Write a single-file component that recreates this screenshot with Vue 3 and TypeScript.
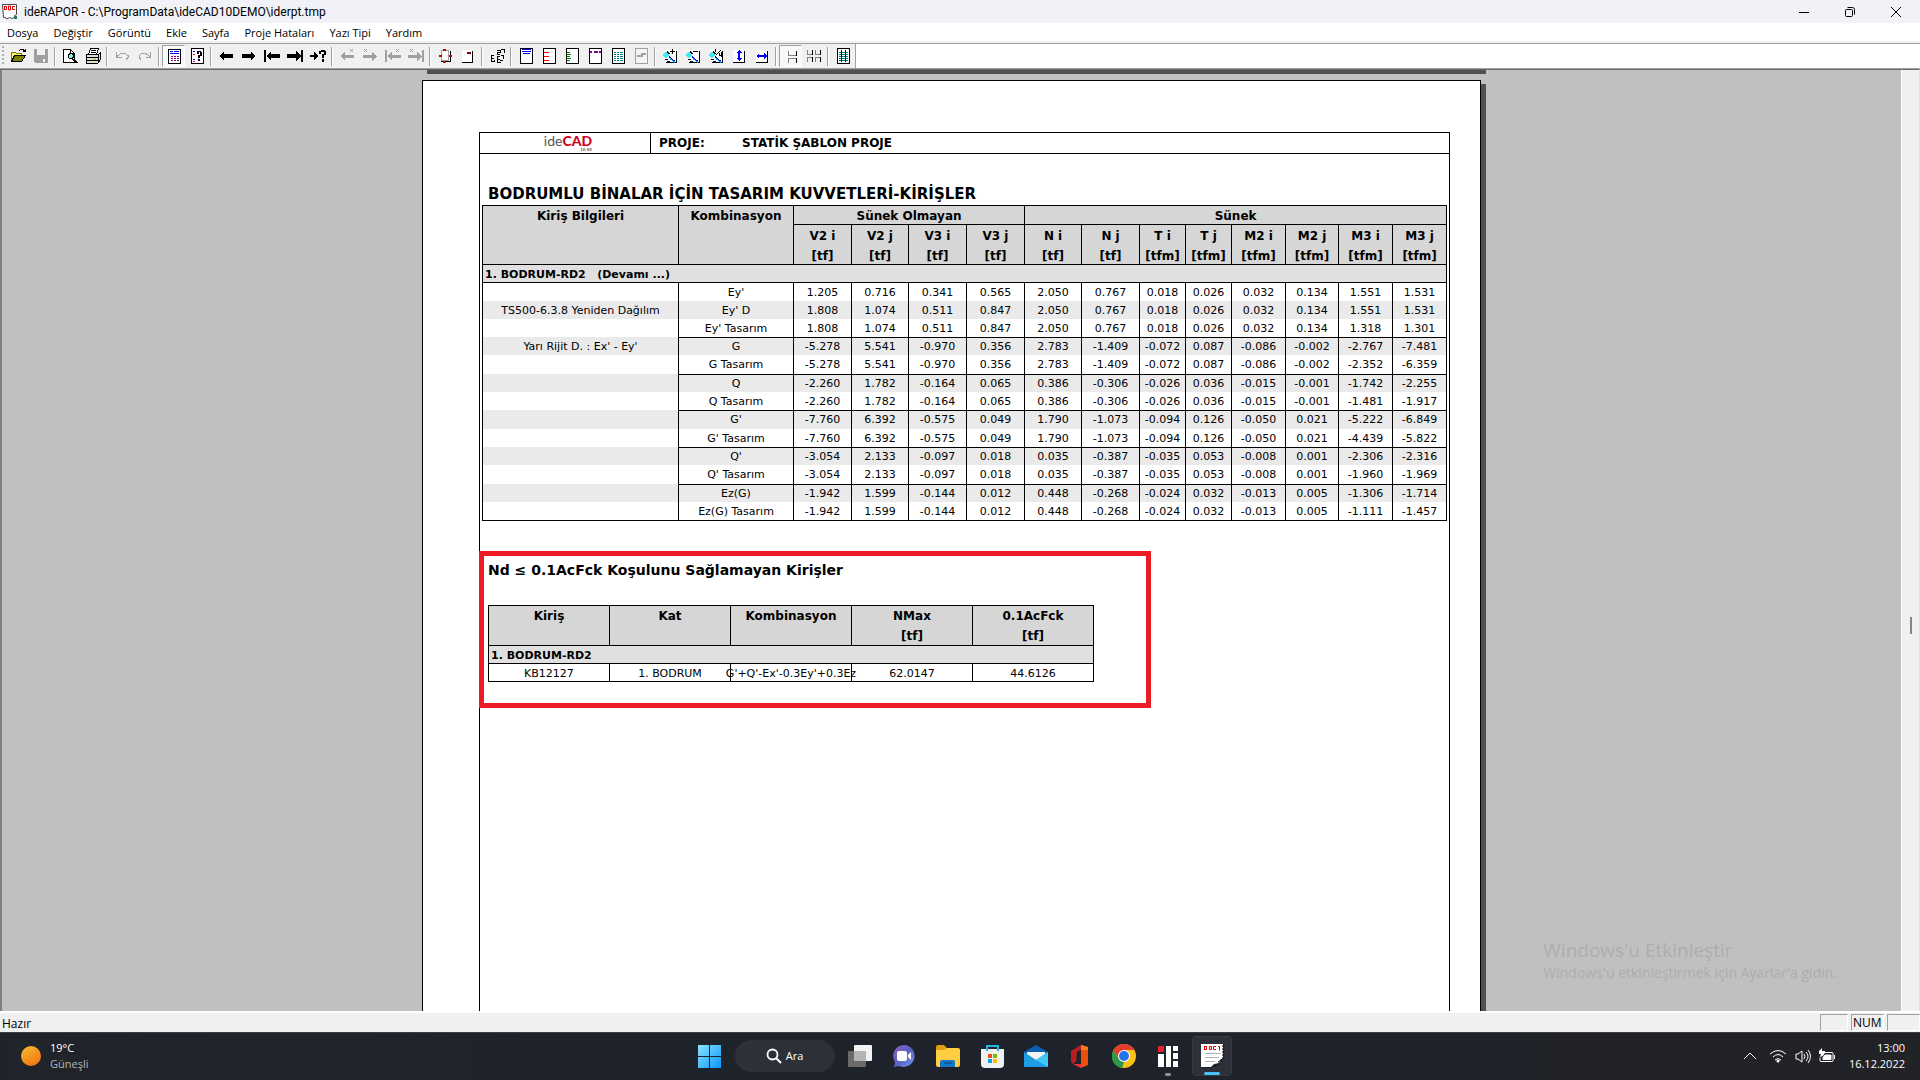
<script setup lang="ts">
type Layer = [d: string, stroke: string, fill?: string]
interface Tool { name: string; art?: Layer[]; pressed?: boolean; sep?: boolean }
interface Row { info: string; combo: string; values: string[]; start?: boolean; tall?: boolean }

const menus = ['Dosya', 'Değiştir', 'Görüntü', 'Ekle', 'Sayfa', 'Proje Hataları', 'Yazı Tipi', 'Yardım']

const K = '#000'
const G = '#a0a0a0'
const B = '#0000ff'
const page: Layer = ['M2.5 .5h12v15h-12z', K, '#fff']
const left = 'M1 8l5-4v2h9v4h-9v2z'
const right = 'M15 8l-5-4v2h-9v4h9v2z'
const sheet: Layer = ['M3 2h11v12h-11z', 'none', '#fff']
const sheetEdge: Layer = ['M4 14.5h10.5v-12', K]
const lens: Layer[] = [
  ['M1 6h1v-1h1v-1h2v1h1v1h1v2h-1v1h-1v1h-2v-1h-1v-1h-1z', 'none', '#40e8f0'],
  ['M4.5 3.5h1v1h1v1h1', K],
  ['M7 8.5l6 5', '#0000c0'],
  ['M8 10.5l5 4', '#00a0ff'],
  ['M3 11.500h3M5 13.500h3', K],
]

const tools: Tool[] = [
  { name: 'Aç', art: [['M1.5 4.5h4l1 1h5v2h-7l-3 5z', '#808000', '#ffff60'], ['M4.5 7.5h11l-4 6h-10z', K, '#808000'], ['M9 2.5l2-1h2l2 2M15.5 .5v3h-3', K]] },
  { name: 'Kaydet', art: [['M1 1h14v14h-13l-1-1z', 'none', G], ['M4 1h8v6h-8zM10 11h2v3h-2z', 'none', '#f0f0f0']] },
  { name: 'sep', sep: true },
  { name: 'Baskı önizleme', art: [['M1.5 1.5h7l4 4v9h-11z', K, '#fff'], ['M8.5 1.5v4h4', K], ['M6 6.500h1l1-1h2l1 1v3l-1 1h-2l-2-1z', K, '#80f0f0'], ['M11.5 11l4 4M10.5 11.5l4 4', K]] },
  { name: 'Yazdır', art: [['M5.5 .5h8l-2 6h-8z', K, '#fff'], ['M6 2.5h5M5.5 4.5h5', K], ['M1.5 6.5h12l2-2v7l-3 4h-11z', K, '#e0e0d0'], ['M1 9.5h12M1 12.5h12M13.5 7v7', K], ['M8 11h3', '#c0c000']] },
  { name: 'sep', sep: true },
  { name: 'Geri al', art: [['M2.5 4v5h5M3 8.5l4-3h4l3 2v2l-2 2', G]] },
  { name: 'Yinele', art: [['M13.5 4v5h-5M13 8.5l-4-3h-4l-3 2v2l2 2', G]] },
  { name: 'sep', sep: true },
  { name: 'Rapor', pressed: true, art: [['M2.5 1.5h12v14h-12z', K, '#fff'], ['M4 3.5h3M8 3.5h5', B], ['M4 5.5h9', B], ['M5 8.5h2M8 8.5h2M11 8.5h2M5 10.5h2M8 10.5h2M11 10.5h2M5 12.5h2M8 12.5h2M11 12.5h2', '#800080']] },
  { name: 'Rapor bilgisi', art: [page, ['M4 3.5h2M4 11.5h2', B], ['M4 6.5h2M4 13.5h2', '#f00'], ['M8 3h4v1h1v4h-2v2h-2v-3h2v-3h-1v2h-2zM9 11h2v2h-2z', 'none', K]] },
  { name: 'sep', sep: true },
  { name: 'Önceki', art: [[left, 'none', K]] },
  { name: 'Sonraki', art: [[right, 'none', K]] },
  { name: 'İlk', art: [['M0 2h2v12h-2zM2 8l5-5v3h9v4h-9v3z', 'none', K]] },
  { name: 'Son', art: [['M14 2h2v12h-2zM14 8l-5-5v3h-9v4h9v3z', 'none', K]] },
  { name: 'Sayfaya git', art: [['M8 8l-4-4v3h-4v2h4v3z', 'none', K], ['M9 3h2v-1h4v1h1v4h-2v3h-2v-4h2v-2h-3v2h-2zM12 11h2v3h-2z', 'none', K]] },
  { name: 'sep', sep: true },
  { name: 'Önceki hata', art: [['M1 8l5-4v3h9v3h-9v3z', 'none', G], ['M11 1l3 3M14 1l-3 3', G]] },
  { name: 'Sonraki hata', art: [['M15 8l-5-4v3h-9v3h9v3z', 'none', G], ['M2 1l3 3M5 1l-3 3', G]] },
  { name: 'İlk hata', art: [['M0 2h2v12h-2zM2 8l5-4v3h9v3h-9v3z', 'none', G], ['M11 1l3 3M14 1l-3 3', G]] },
  { name: 'Son hata', art: [['M14 2h2v12h-2zM14 8l-5-4v3h-9v3h9v3z', 'none', G], ['M2 1l3 3M5 1l-3 3', G]] },
  { name: 'sep', sep: true },
  { name: 'Sayfa boyutu', art: [['M4 3h9v10h-9z', 'none', '#fff'], ['M4.5 2.5h7v10h-7z', G], ['M4 13.500h9.500v-11', K], ['M6 1h3v2h-3zM2 7h3v2h-3zM12 7h3v2h-3zM6 13h3v2h-3z', 'none', '#d00000']] },
  { name: 'Sayfa numarası', art: [['M2 2h11v12h-11z', 'none', '#fff'], ['M2 14.500h10.500v-12', K], ['M7 4h4v2h-4z', 'none', '#800000']] },
  { name: 'sep', sep: true },
  { name: 'Karakterler', art: [['M2.500 8v6M2 10.500h3M2 13.500h4M5.500 12v2M2 7.500h3M8.500 9v5M8 8.500h3M8 11.500h3M8 14.500h4M8 2.500h3v2h-3v2h3M12 1.500h3v3M12 7.500h3M14.500 7v4M11 12.500h3', K]] },
  { name: 'sep', sep: true },
  { name: 'Üst bilgi', art: [page, ['M4 1.500h9M4 3.500h9M5 5.500h7', '#0000ff']] },
  { name: 'Sol kenar', art: [page, ['M3 4.500h5M3 8.500h5M3 12.500h5', '#f00']] },
  { name: 'Cetvel', art: [page, ['M3 4.500h3M3 6.500h4M3 8.500h3M3 10.500h4M3 12.500h3', '#008000']] },
  { name: 'Üst kenar', art: [page, ['M3 4.500h2M7 4.500h4M12 4.500h2M3 3.500h2M7 3.500h4M12 3.500h2', '#800080']] },
  { name: 'Izgara', art: [page, ['M4 4.500h2M7 4.500h2M10 4.500h3M4 6.500h2M7 6.500h2M10 6.500h3M4 8.500h2M7 8.500h2M10 8.500h3M4 10.500h2M7 10.500h2M10 10.500h3M4 12.500h2M7 12.500h2M10 12.500h3', '#008080']] },
  { name: 'Çizgi', art: [['M2.500 .5h12v15h-12z', G, '#f4f4f4'], ['M4 7h4v-2h5v2h-3v2h-6z', 'none', G]] },
  { name: 'sep', sep: true },
  { name: 'Yakınlaş', art: [sheet, sheetEdge, ...lens, ['M8 3.500h5M10.500 1v5', K]] },
  { name: 'Uzaklaş', art: [sheet, sheetEdge, ...lens, ['M8 3.500h5', K]] },
  { name: 'Yüzde', art: [sheet, sheetEdge, ...lens, ['M7.500 1v3M8 7l5-5M11.500 5v2h2M13.500 4v5', K]] },
  { name: 'Sayfa yüksekliği', art: [['M2 2h11v12h-11z', 'none', '#fff'], ['M2 14.500h11.500v-12', K], ['M8 2l3 3h-2v5h2l-3 3l-3-3h2v-5h-2z', 'none', '#0000ff']] },
  { name: 'Sayfa genişliği', art: [['M2 2h11v12h-11z', 'none', '#fff'], ['M2 14.500h11.500v-12', K], ['M2 8l3-3v2h5v-2l3 3l-3 3v-2h-5v2z', 'none', '#0000ff']] },
  { name: 'sep', sep: true },
  { name: 'Tek sayfa', pressed: true, art: [['M5 7.500h8M5 10.500h8', '#808080'], ['M5.500 3v4M5.500 11v4', '#808080'], ['M13.500 3v5M13.500 10v5', K]] },
  { name: 'Çift sayfa', art: [['M1 6.500h5M1 9.500h5M9 6.500h5M9 9.500h5M1.500 2v4M1.500 10v4M9.500 2v4M9.500 10v4', '#808080'], ['M6.500 2v5M6.500 9v5M14.500 2v5M14.500 9v5', K]] },
  { name: 'sep', sep: true },
  { name: 'Tablo', art: [page, ['M4 4.500h9M4 6.500h9M4 8.500h9M4 10.500h9M4 12.500h9', '#008080'], ['M6.500 2v12M10.500 2v12', '#000080']] },
]

const columns = [
  { w: 196 }, { w: 115 },
  { w: 58, n: 'V2 i', u: '[tf]' }, { w: 57, n: 'V2 j', u: '[tf]' }, { w: 58, n: 'V3 i', u: '[tf]' }, { w: 58, n: 'V3 j', u: '[tf]' },
  { w: 57, n: 'N i', u: '[tf]' }, { w: 58, n: 'N j', u: '[tf]' }, { w: 46, n: 'T i', u: '[tfm]' }, { w: 46, n: 'T j', u: '[tfm]' },
  { w: 54, n: 'M2 i', u: '[tfm]' }, { w: 53, n: 'M2 j', u: '[tfm]' }, { w: 54, n: 'M3 i', u: '[tfm]' }, { w: 54, n: 'M3 j', u: '[tfm]' },
]

const beamColumns = [
  { n: 'Kiriş', u: '' }, { n: 'Kat', u: '' }, { n: 'Kombinasyon', u: '' }, { n: 'NMax', u: '[tf]' }, { n: '0.1AcFck', u: '[tf]' },
]

const v = (s: string) => s.split(' ')
const rows: Row[] = [
  { info: '', combo: "Ey'", values: v('1.205 0.716 0.341 0.565 2.050 0.767 0.018 0.026 0.032 0.134 1.551 1.531') },
  { info: 'TS500-6.3.8 Yeniden Dağılım', combo: "Ey' D", values: v('1.808 1.074 0.511 0.847 2.050 0.767 0.018 0.026 0.032 0.134 1.551 1.531') },
  { info: '', combo: "Ey' Tasarım", values: v('1.808 1.074 0.511 0.847 2.050 0.767 0.018 0.026 0.032 0.134 1.318 1.301') },
  { info: "Yarı Rijit D. : Ex' - Ey'", combo: 'G', start: true, values: v('-5.278 5.541 -0.970 0.356 2.783 -1.409 -0.072 0.087 -0.086 -0.002 -2.767 -7.481') },
  { info: '', combo: 'G Tasarım', tall: true, values: v('-5.278 5.541 -0.970 0.356 2.783 -1.409 -0.072 0.087 -0.086 -0.002 -2.352 -6.359') },
  { info: '', combo: 'Q', start: true, values: v('-2.260 1.782 -0.164 0.065 0.386 -0.306 -0.026 0.036 -0.015 -0.001 -1.742 -2.255') },
  { info: '', combo: 'Q Tasarım', values: v('-2.260 1.782 -0.164 0.065 0.386 -0.306 -0.026 0.036 -0.015 -0.001 -1.481 -1.917') },
  { info: '', combo: "G'", start: true, tall: true, values: v('-7.760 6.392 -0.575 0.049 1.790 -1.073 -0.094 0.126 -0.050 0.021 -5.222 -6.849') },
  { info: '', combo: "G' Tasarım", values: v('-7.760 6.392 -0.575 0.049 1.790 -1.073 -0.094 0.126 -0.050 0.021 -4.439 -5.822') },
  { info: '', combo: "Q'", start: true, values: v('-3.054 2.133 -0.097 0.018 0.035 -0.387 -0.035 0.053 -0.008 0.001 -2.306 -2.316') },
  { info: '', combo: "Q' Tasarım", tall: true, values: v('-3.054 2.133 -0.097 0.018 0.035 -0.387 -0.035 0.053 -0.008 0.001 -1.960 -1.969') },
  { info: '', combo: 'Ez(G)', start: true, values: v('-1.942 1.599 -0.144 0.012 0.448 -0.268 -0.024 0.032 -0.013 0.005 -1.306 -1.714') },
  { info: '', combo: 'Ez(G) Tasarım', values: v('-1.942 1.599 -0.144 0.012 0.448 -0.268 -0.024 0.032 -0.013 0.005 -1.111 -1.457') },
]
</script>

<template>
  <div class="screen">
    <header class="titlebar">
      <svg class="app-icon" width="16" height="16" viewBox="0 0 16 16" aria-hidden="true">
        <path d="M.5 .5h14v10l-2 1v2l-3 1-2-1-3 1.500-1-1.500h-2z" fill="#fff" stroke="#444" />
        <path d="M12 12h3v3h-3z" fill="#208070" />
        <path d="M2.500 2v4M2.500 2.500h2v3h-2M6.500 2v4h2v-4h-2M13 2.500h-2.500v3h2.500" fill="none" stroke="#e00000" />
      </svg>
      <span class="title">ideRAPOR - C:\ProgramData\ideCAD10DEMO\iderpt.tmp</span>
      <button class="win" aria-label="Simge durumuna küçült"><svg width="12" height="12" viewBox="0 0 12 12"><path d="M1 6.500h10" /></svg></button>
      <button class="win" aria-label="Önceki boyut"><svg width="12" height="12" viewBox="0 0 12 12"><rect x="1.500" y="3.500" width="7" height="7" rx="1" /><path d="M3.500 1.500h5q2 0 2 2v5" /></svg></button>
      <button class="win" aria-label="Kapat"><svg width="12" height="12" viewBox="0 0 12 12"><path d="M1 1l10 10M11 1l-10 10" /></svg></button>
    </header>

    <nav class="menubar">
      <button v-for="m in menus" :key="m">{{ m }}</button>
    </nav>

    <div class="toolrow">
      <div class="toolbar" role="toolbar">
        <span class="grip"></span>
        <template v-for="(t, i) in tools" :key="i">
          <span v-if="t.sep" class="sep"></span>
          <button v-else :class="{ pressed: t.pressed }" :aria-label="t.name">
            <svg width="16" height="16" viewBox="0 0 16 16" shape-rendering="crispEdges">
              <path v-for="(l, j) in t.art" :key="j" :d="l[0]" :stroke="l[1]" :fill="l[2] ?? 'none'" />
            </svg>
          </button>
        </template>
      </div>
    </div>

    <main class="workspace">
      <div class="desk">
        <div class="sheets">
          <div class="previous"></div>
          <article class="sheet">
            <div class="frame">
              <div class="band">
                <div class="logo">
                  <div class="brand"><span>ide</span><b>CAD</b></div>
                  <small>10.94</small>
                </div>
                <strong class="label">PROJE:</strong>
                <strong>STATİK ŞABLON PROJE</strong>
              </div>
              <h1>BODRUMLU BİNALAR İÇİN TASARIM KUVVETLERİ-KİRİŞLER</h1>
              <table class="forces">
                <colgroup><col v-for="(c, i) in columns" :key="i" :style="{ width: c.w + 'px' }" /></colgroup>
                <thead>
                  <tr class="upper">
                    <th rowspan="2">Kiriş Bilgileri</th>
                    <th rowspan="2">Kombinasyon</th>
                    <th colspan="4">Sünek Olmayan</th>
                    <th colspan="8">Sünek</th>
                  </tr>
                  <tr>
                    <th v-for="c in columns.slice(2)" :key="c.n"><div class="unit">{{ c.n }}<br />{{ c.u }}</div></th>
                  </tr>
                </thead>
                <tbody>
                  <tr class="group"><th colspan="14">1. BODRUM-RD2 &nbsp; (Devamı ...)</th></tr>
                  <tr v-for="(r, i) in rows" :key="i" :class="{ start: r.start, tall: r.tall, shade: i % 2 === 1 }">
                    <td>{{ r.info }}</td>
                    <td>{{ r.combo }}</td>
                    <td v-for="(x, j) in r.values" :key="j">{{ x }}</td>
                  </tr>
                </tbody>
              </table>

              <section class="marked">
                <h2>Nd ≤ 0.1AcFck Koşulunu Sağlamayan Kirişler</h2>
                <table class="beams">
                  <thead>
                    <tr>
                      <th v-for="c in beamColumns" :key="c.n"><div class="unit">{{ c.n }}<br />{{ c.u }}</div></th>
                    </tr>
                  </thead>
                  <tbody>
                    <tr class="group"><th colspan="5">1. BODRUM-RD2</th></tr>
                    <tr>
                      <td>KB12127</td>
                      <td>1. BODRUM</td>
                      <td><span class="wide">G'+Q'-Ex'-0.3Ey'+0.3Ez</span></td>
                      <td>62.0147</td>
                      <td>44.6126</td>
                    </tr>
                  </tbody>
                </table>
              </section>
            </div>
          </article>
        </div>
        <div class="activate">
          <p class="big">Windows'u Etkinleştir</p>
          <p>Windows'u etkinleştirmek için Ayarlar'a gidin.</p>
        </div>
      </div>
      <div class="scroll"><span class="thumb"></span></div>
    </main>

    <footer class="status">
      <span class="ready">Hazır</span>
      <span class="cell"></span>
      <span class="cell num">NUM</span>
      <span class="cell last"></span>
    </footer>

    <div class="taskbar">
      <div class="weather">
        <span class="sun"></span>
        <div><div>19°C</div><div class="dim">Güneşli</div></div>
      </div>
      <div class="apps">
        <button aria-label="Başlat">
          <svg width="24" height="24" viewBox="0 0 24 24">
            <defs><linearGradient id="win" x1="0" y1="0" x2="1" y2="1" gradientUnits="objectBoundingBox"><stop offset="0" stop-color="#8be4ff" /><stop offset="1" stop-color="#0a96f8" /></linearGradient></defs>
            <path d="M1 1h11v11h-11zM13 1h11v11h-11zM1 13h11v11h-11zM13 13h11v11h-11z" fill="url(#win)" />
          </svg>
        </button>
        <button class="search">
          <svg width="16" height="16" viewBox="0 0 16 16"><circle cx="6.500" cy="6.500" r="5" fill="none" stroke="#fff" stroke-width="1.800" /><path d="M10 10l5 5" stroke="#fff" stroke-width="2" /></svg>
          Ara
        </button>
        <button aria-label="Görev görünümü">
          <svg width="24" height="24" viewBox="0 0 24 24"><rect x="6" y="1" width="18" height="16" rx="1" fill="#f2f2f2" /><rect x="0" y="7" width="18" height="16" rx="1" fill="#6b6b6b" /><path d="M6 7h12v10h-12z" fill="#b4b4b4" /></svg>
        </button>
        <button aria-label="Sohbet">
          <svg width="24" height="24" viewBox="0 0 24 24">
            <defs><linearGradient id="chat" x1="0" y1="0" x2="1" y2="1"><stop offset="0" stop-color="#8f62b8" /><stop offset=".5" stop-color="#5b5fc7" /><stop offset="1" stop-color="#6f9be8" /></linearGradient></defs>
            <path d="M12 1a11 11 0 1 1-5 21l-5 1 1-5a11 11 0 0 1 9-17z" fill="url(#chat)" />
            <rect x="5" y="7" width="10" height="10" rx="2" fill="#fff" /><path d="M16 11l3-3v8l-3-3z" fill="#fff" />
          </svg>
        </button>
        <button aria-label="Dosya Gezgini">
          <svg width="24" height="24" viewBox="0 0 24 24"><path d="M0 3q0-2 2-2h6l3 3v4h-11z" fill="#e09c10" /><path d="M0 6h8l3-2h11q2 0 2 2v15q0 2-2 2h-20q-2 0-2-2z" fill="#ffcd42" /><path d="M4 23v-5q0-2 2-2h11q2 0 2 2v5z" fill="#0f78c8" /><path d="M8 19h8" stroke="#0a5a9c" stroke-width="2" /></svg>
        </button>
        <button aria-label="Microsoft Store">
          <svg width="24" height="24" viewBox="0 0 24 24"><path d="M1 5h23v15q0 4-4 4h-15q-4 0-4-4z" fill="#f0f0f0" /><path d="M7 7v-5h11v5" fill="none" stroke="#25b4e8" stroke-width="2" /><path d="M8 10h4v4h-4z" fill="#f25022" /><path d="M13 10h4v4h-4z" fill="#7fba00" /><path d="M8 15h4v4h-4z" fill="#00a4ef" /><path d="M13 15h4v4h-4z" fill="#ffb900" /></svg>
        </button>
        <button aria-label="Posta">
          <svg width="24" height="24" viewBox="0 0 24 24"><path d="M0 8l12-7 12 7v4h-24z" fill="#0a5fae" /><path d="M3 8h18v6l-9 4-9-4z" fill="#f4f4f4" /><path d="M0 8l12 8 12-8v15h-24z" fill="#1e9ce4" /><path d="M24 8v15l-12-7z" fill="#40c8f4" /></svg>
        </button>
        <button aria-label="Office">
          <svg width="24" height="24" viewBox="0 0 24 24">
            <path d="M3 7l10-6v5l-4 2v9l-4 3-2-2z" fill="#b81c24" />
            <path d="M13 1l7 2v18l-7 3-8-4 8 0z" fill="#e8500c" />
            <path d="M6 20h7v4z" fill="#e82840" />
            <path d="M13 1l7 2v3h-7z" fill="#f47a20" />
            <path d="M9 8l4-2v13h-5z" fill="#202228" />
          </svg>
        </button>
        <button aria-label="Chrome">
          <svg width="24" height="24" viewBox="0 0 24 24"><circle cx="12" cy="12" r="12" fill="#fbc116" /><path d="M1.600 6a12 12 0 0 1 20.800 0h-10.400l-5 9z" fill="#e33b2e" /><path d="M1.600 6l5.200 9 5.200 3-2 6a12 12 0 0 1-8.400-18z" fill="#269a48" /><circle cx="12" cy="12" r="6" fill="#fff" /><circle cx="12" cy="12" r="5" fill="#2476e8" /></svg>
        </button>
        <button class="running" aria-label="ideCAD">
          <svg width="24" height="24" viewBox="0 0 24 24"><path d="M2 2h6v6h-6z" fill="#e8202c" /><path d="M2 10h6v13h-6zM10 2h5v21h-5zM17 2h5v5h-5zM17 9h5v6h-5zM17 17h5v6h-5z" fill="#fff" /></svg>
        </button>
        <button class="current" aria-label="ideRAPOR">
          <svg width="24" height="24" viewBox="0 0 24 24"><path d="M1 0h22v14l-3 2-1 3-5 1-3 3h-10z" fill="#fff" /><path d="M23 1v14l-4 2-1 4-5 1-2 2h-9" fill="none" stroke="#000" stroke-dasharray="2 1" /><path d="M5 9.500h16M5 13.500h14M5 17.500h10" stroke="#b0b0b0" /><path d="M4.500 2v4M4.500 2.500h2v3h-2M9.500 2.500h2v3h-2zM16 2.500h-2.500v3h2.500M18 2.500h1.500v4" fill="none" stroke="#e00000" /></svg>
        </button>
      </div>
      <div class="tray">
        <svg width="14" height="16" viewBox="0 0 14 16"><path d="M1 11l6-6 6 6" /></svg>
        <svg class="wifi" width="18" height="16" viewBox="0 0 18 16"><path d="M1 6q8-7 16 0M4 9q5-5 10 0M6 12q3-3 6 0" /><circle cx="9" cy="13" r="1.500" fill="#fff" stroke="none" /></svg>
        <svg width="16" height="16" viewBox="0 0 16 16"><path d="M1 6h2l4-3v11l-4-3h-2zM9 6q2 2 0 5M11 4q4 4 0 9M13 2q5 6 0 13" /></svg>
        <svg width="16" height="16" viewBox="0 0 16 16"><path d="M5 4.500h8q1 0 1 1v7q0 1-1 1h-11q-1 0-1-1v-3" /><path d="M6 7h6v4.500h-8v-2z" fill="#fff" /><path d="M15.500 7v4" /><path d="M3 0v3h3q0 5-5 6l1-3h-2v-3z" fill="#fff" stroke="none" /></svg>
        <div class="clock"><div>13:00</div><div>16.12.2022</div></div>
      </div>
    </div>
  </div>
</template>

<style>
body {
  margin: 0;
}
</style>

<style scoped>
.screen {
  display: flex;
  flex-direction: column;
  height: 100vh;
  overflow: hidden;
  background: #f0f0f0;
  color: #000;
  font-family: "Open Sans", "Noto Sans", sans-serif;
  font-size: 11px;
  line-height: 16px;
}
button {
  border: 0;
  padding: 0;
  background: none;
  color: inherit;
  font: inherit;
}
svg {
  display: block;
}
.titlebar {
  display: flex;
  align-items: center;
  flex: none;
  height: 23px;
  padding: 0 1px 0 2px;
  background: #f0f2f8;
}
.title {
  flex: 1;
  margin-left: 6px;
  font-family: Roboto, "Open Sans", sans-serif;
  font-size: 12px;
}
.win {
  display: flex;
  align-items: center;
  justify-content: center;
  width: 46px;
  height: 20px;
}
.win svg {
  fill: none;
  stroke: #000;
}
.menubar {
  display: flex;
  flex: none;
  gap: 15px;
  height: 18px;
  padding-left: 7px;
  border-bottom: 2px solid #f0f0f0;
  background: #fff;
}
.menubar button {
  line-height: 20px;
}
.toolrow {
  display: flex;
  flex: none;
  border-top: 1px solid #a0a0a0;
  border-bottom: 1px solid #a0a0a0;
  background: #fff;
}
.toolbar {
  display: flex;
  align-items: center;
  height: 24px;
  padding-right: 1px;
  border-right: 1px solid #a0a0a0;
  background: #f0f0f0;
}
.toolbar button {
  display: flex;
  align-items: center;
  justify-content: center;
  box-sizing: border-box;
  width: 23px;
  height: 22px;
}
.toolbar .pressed {
  border: 1px solid #fff;
  border-top-color: #a0a0a0;
  border-left-color: #a0a0a0;
  background: #f8f8f8;
}
.grip {
  width: 2px;
  height: 20px;
  margin: 0 2px;
  background: repeating-linear-gradient(#b0b0b0 0 2px, #f0f0f0 2px 4px);
}
.sep {
  box-sizing: border-box;
  width: 2px;
  height: 19px;
  margin: 0 2px;
  border-left: 1px solid #a0a0a0;
  border-right: 1px solid #fff;
}
.workspace {
  display: flex;
  flex: 1;
  min-height: 0;
  border-top: 1px solid #696969;
  border-right: 1px solid #e3e3e3;
}
.desk {
  position: relative;
  display: flex;
  flex: 1;
  justify-content: center;
  box-sizing: border-box;
  overflow: hidden;
  border-left: 2px solid #808080;
  background: #c0c0c0;
}
.sheets {
  display: flex;
  flex-direction: column;
  width: 100%;
  max-width: 1059px;
}
.previous {
  flex: none;
  height: 4px;
  margin: 0 -5px 6px 5px;
  background: #505050;
}
.sheet {
  display: flex;
  flex: 1;
  padding: 51px 30px 0 56px;
  border: 1px solid #000;
  border-bottom: 0;
  background: #fff;
  box-shadow: 5px 4px 0 #505050;
  font-family: "DejaVu Sans", Verdana, sans-serif;
}
.frame {
  flex: 1;
  min-width: 0;
  border: 1px solid #000;
  border-bottom: 0;
}
.band {
  display: flex;
  align-items: center;
  height: 20px;
  border-bottom: 1px solid #000;
  font-size: 12px;
}
.logo {
  display: flex;
  flex-direction: column;
  align-items: center;
  box-sizing: border-box;
  width: 171px;
  height: 20px;
  padding-left: 6px;
  border-right: 1px solid #000;
}
.brand {
  font-family: Lato, "Open Sans", sans-serif;
  font-size: 14px;
  line-height: 15px;
  color: #555;
}
.brand b {
  font-weight: 900;
  color: #d0021b;
}
.logo small {
  margin-left: 36px;
  font-size: 4px;
  line-height: 4px;
}
.label {
  width: 83px;
  margin-left: 8px;
}
h1,
h2 {
  margin: 0;
  font-size: 14px;
  line-height: 16px;
  white-space: nowrap;
}
h1 {
  margin: 32px 0 3px 8px;
  font-size: 15px;
}
table {
  border-collapse: separate;
  border-spacing: 0;
  table-layout: fixed;
  border-left: 1px solid #000;
  border-top: 1px solid #000;
  text-align: center;
}
th,
td {
  padding: 0;
  border-right: 1px solid #000;
  vertical-align: top;
  white-space: nowrap;
}
th {
  border-bottom: 1px solid #000;
  background: #d6d6d6;
  font-size: 12px;
}
.upper th {
  padding-top: 2px;
  line-height: 16px;
}
.unit {
  box-sizing: border-box;
  height: 39px;
  padding-top: 1px;
  line-height: 20px;
}
.forces {
  width: calc(100% - 5px);
  margin-left: 2px;
}
.group th {
  height: 14px;
  padding: 3px 0 0 2px;
  background: #e0e0e0;
  font-size: 11px;
  line-height: 14px;
  text-align: left;
}
td {
  height: 18px;
  padding-top: 3px;
  box-sizing: border-box;
  line-height: 14px;
}
.tall td {
  height: 19px;
}
.shade td {
  background: #eaeaea;
}
.start td:not(:first-child) {
  padding-top: 2px;
  border-top: 1px solid #000;
}
tr:last-child td {
  height: 19px;
  border-bottom: 1px solid #000;
}
.marked {
  box-sizing: border-box;
  width: 672px;
  margin: 30px 0 0 -1px;
  padding: 6px 4px 21px;
  border: 5px solid #ed1c24;
}
.beams {
  width: 606px;
  margin-top: 27px;
}
.beams .unit {
  padding-top: 0;
}
.beams tr:last-child td {
  height: 18px;
}
.wide {
  display: inline-block;
  margin: 0 -20px;
}
.activate {
  position: absolute;
  right: 64px;
  bottom: 28px;
  color: #adadad;
  font-size: 14px;
  line-height: 20px;
}
.activate p {
  margin: 0;
}
.activate .big {
  font-size: 19px;
  line-height: 26px;
}
.scroll {
  display: flex;
  justify-content: center;
  width: 17px;
  border-left: 1px solid #fff;
  background: #f0f0f0;
}
.thumb {
  width: 2px;
  height: 17px;
  margin-top: 547px;
  background: #868686;
}
.status {
  display: flex;
  align-items: center;
  flex: none;
  gap: 3px;
  height: 19px;
  border-top: 2px solid #fff;
  font-size: 12px;
}
.ready {
  flex: 1;
  padding: 2px 0 0 2px;
}
.cell {
  box-sizing: border-box;
  width: 28px;
  height: 17px;
  border: 1px solid #fff;
  border-top-color: #a0a0a0;
  border-left-color: #a0a0a0;
}
.num {
  width: 33px;
  padding-left: 1px;
}
.last {
  width: 33px;
}
.taskbar {
  display: grid;
  grid-template-columns: 1fr auto 1fr;
  align-items: center;
  flex: none;
  height: 47px;
  border-top: 1px solid #3c3e42;
  background: linear-gradient(90deg, #20242a, #1e222b 50%, #222327);
  color: #fff;
}
.weather {
  display: flex;
  align-items: center;
  gap: 9px;
  padding: 0 0 2px 21px;
}
.sun {
  width: 20px;
  height: 20px;
  border-radius: 50%;
  background: linear-gradient(150deg, #f4c030, #f46a10);
}
.dim {
  color: #b4b6ba;
}
.apps {
  display: flex;
  align-items: center;
  gap: 4px;
  padding-bottom: 2px;
}
.apps button {
  position: relative;
  display: flex;
  align-items: center;
  justify-content: center;
  box-sizing: border-box;
  width: 40px;
  height: 40px;
}
.apps .search {
  gap: 4px;
  width: 100px;
  height: 32px;
  margin: 0 1px 0 2px;
  border-radius: 16px;
  background: #2d3038;
}
.apps .current {
  border: 1px solid #383b42;
  border-radius: 4px;
  background: #2d3038;
}
.running::after,
.current::after {
  content: "";
  position: absolute;
  bottom: 0;
  left: calc(50% - 3px);
  width: 6px;
  height: 3px;
  border-radius: 2px;
  background: #909296;
}
.current::after {
  left: calc(50% - 8px);
  width: 16px;
  background: #4cc2ff;
}
.tray {
  display: flex;
  align-items: center;
  justify-content: flex-end;
  gap: 8px;
  padding: 0 15px 2px 0;
}
.tray svg {
  fill: none;
  stroke: #fff;
}
.wifi {
  margin-left: 4px;
}
.clock {
  margin-left: 6px;
  text-align: right;
}
</style>
